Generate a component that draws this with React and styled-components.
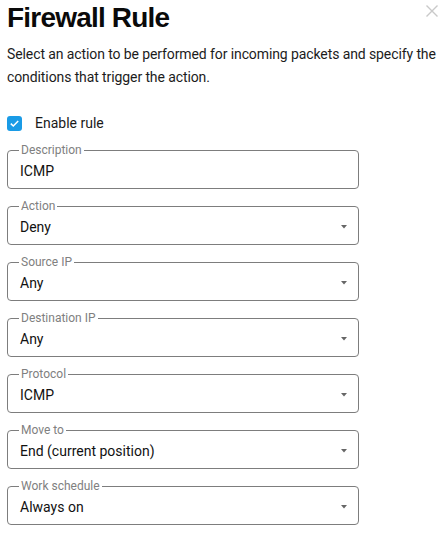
import styled, { createGlobalStyle } from 'styled-components';

const GlobalStyle = createGlobalStyle`
    body {
        margin: 0;
        background: #fff;
        font-family: Roboto, "Liberation Sans", sans-serif;
    }
`;

const fields = [
    { label: 'Description', value: 'ICMP', select: false },
    { label: 'Action', value: 'Deny', select: true },
    { label: 'Source IP', value: 'Any', select: true },
    { label: 'Destination IP', value: 'Any', select: true },
    { label: 'Protocol', value: 'ICMP', select: true },
    { label: 'Move to', value: 'End (current position)', select: true },
    { label: 'Work schedule', value: 'Always on', select: true },
];

const App = () => {
    return (
        <Dialog>
            <GlobalStyle />
            <Header>
                <Title>Firewall Rule</Title>
                <CloseButton aria-label="Close">
                    <svg width="12" height="12" viewBox="0 0 12 12">
                        <path d="M0.5 0.5 L11.5 11.5 M11.5 0.5 L0.5 11.5" stroke="#c9c9c9" strokeWidth="1.4" />
                    </svg>
                </CloseButton>
            </Header>
            <Intro>
                Select an action to be performed for incoming packets and specify the conditions that trigger the action.
            </Intro>
            <CheckRow>
                <CheckBox>
                    <svg width="11" height="11" viewBox="0 0 11 11">
                        <path d="M1.8 5.6 L4.3 8 L9.2 3" fill="none" stroke="#fff" strokeWidth="1.5" />
                    </svg>
                </CheckBox>
                <CheckLabel>Enable rule</CheckLabel>
            </CheckRow>
            <Fields>
                {fields.map((f) => (
                    <Field key={f.label}>
                        <Legend>{f.label}</Legend>
                        <ValueRow>
                            <Value>{f.value}</Value>
                            {f.select && (
                                <svg width="6" height="4" viewBox="0 0 6 4">
                                    <path d="M0 0 L6 0 L3 3.5 Z" fill="#666" />
                                </svg>
                            )}
                        </ValueRow>
                    </Field>
                ))}
            </Fields>
        </Dialog>
    );
};

const Dialog = styled.div`
    padding: 0 0 0 7px;
    color: #111;
`;

const Header = styled.div`
    display: flex;
    justify-content: space-between;
    align-items: flex-start;
`;

const Title = styled.h1`
    margin: 0;
    font-family: "Liberation Sans", Arial, sans-serif;
    font-size: 28px;
    line-height: 36px;
    font-weight: 700;
    letter-spacing: -0.8px;
    color: #0a0a0a;
`;

const CloseButton = styled.div`
    display: flex;
    margin-top: 5px;
    margin-right: 10px;
`;

const Intro = styled.p`
    margin: 7px 0 0;
    font-size: 14px;
    line-height: 23px;
    letter-spacing: -0.1px;
    color: #1c1c1c;
`;

const CheckRow = styled.div`
    display: flex;
    align-items: center;
    height: 24px;
    margin-top: 22px;
`;

const CheckBox = styled.span`
    width: 15px;
    height: 15px;
    border-radius: 3px;
    background: #1a9be6;
    display: flex;
    align-items: center;
    justify-content: center;
`;

const CheckLabel = styled.span`
    margin-left: 13px;
    font-size: 14px;
    color: #1a1a1a;
`;

const Fields = styled.div`
    display: flex;
    flex-direction: column;
    gap: 10px;
    margin-top: 8px;
`;

const Field = styled.fieldset`
    width: 352px;
    box-sizing: border-box;
    margin: 0;
    padding: 0 11px 4px;
    border: 1px solid #7d7d7d;
    border-radius: 4px;
`;

const Legend = styled.legend`
    padding: 0 2px;
    font-size: 12px;
    line-height: 14px;
    color: #808080;
`;

const ValueRow = styled.div`
    display: flex;
    align-items: center;
    justify-content: space-between;
    height: 27px;
    padding-left: 1px;
    padding-right: 0;
`;

const Value = styled.span`
    font-size: 14px;
    color: #111;
`;

export default App;
